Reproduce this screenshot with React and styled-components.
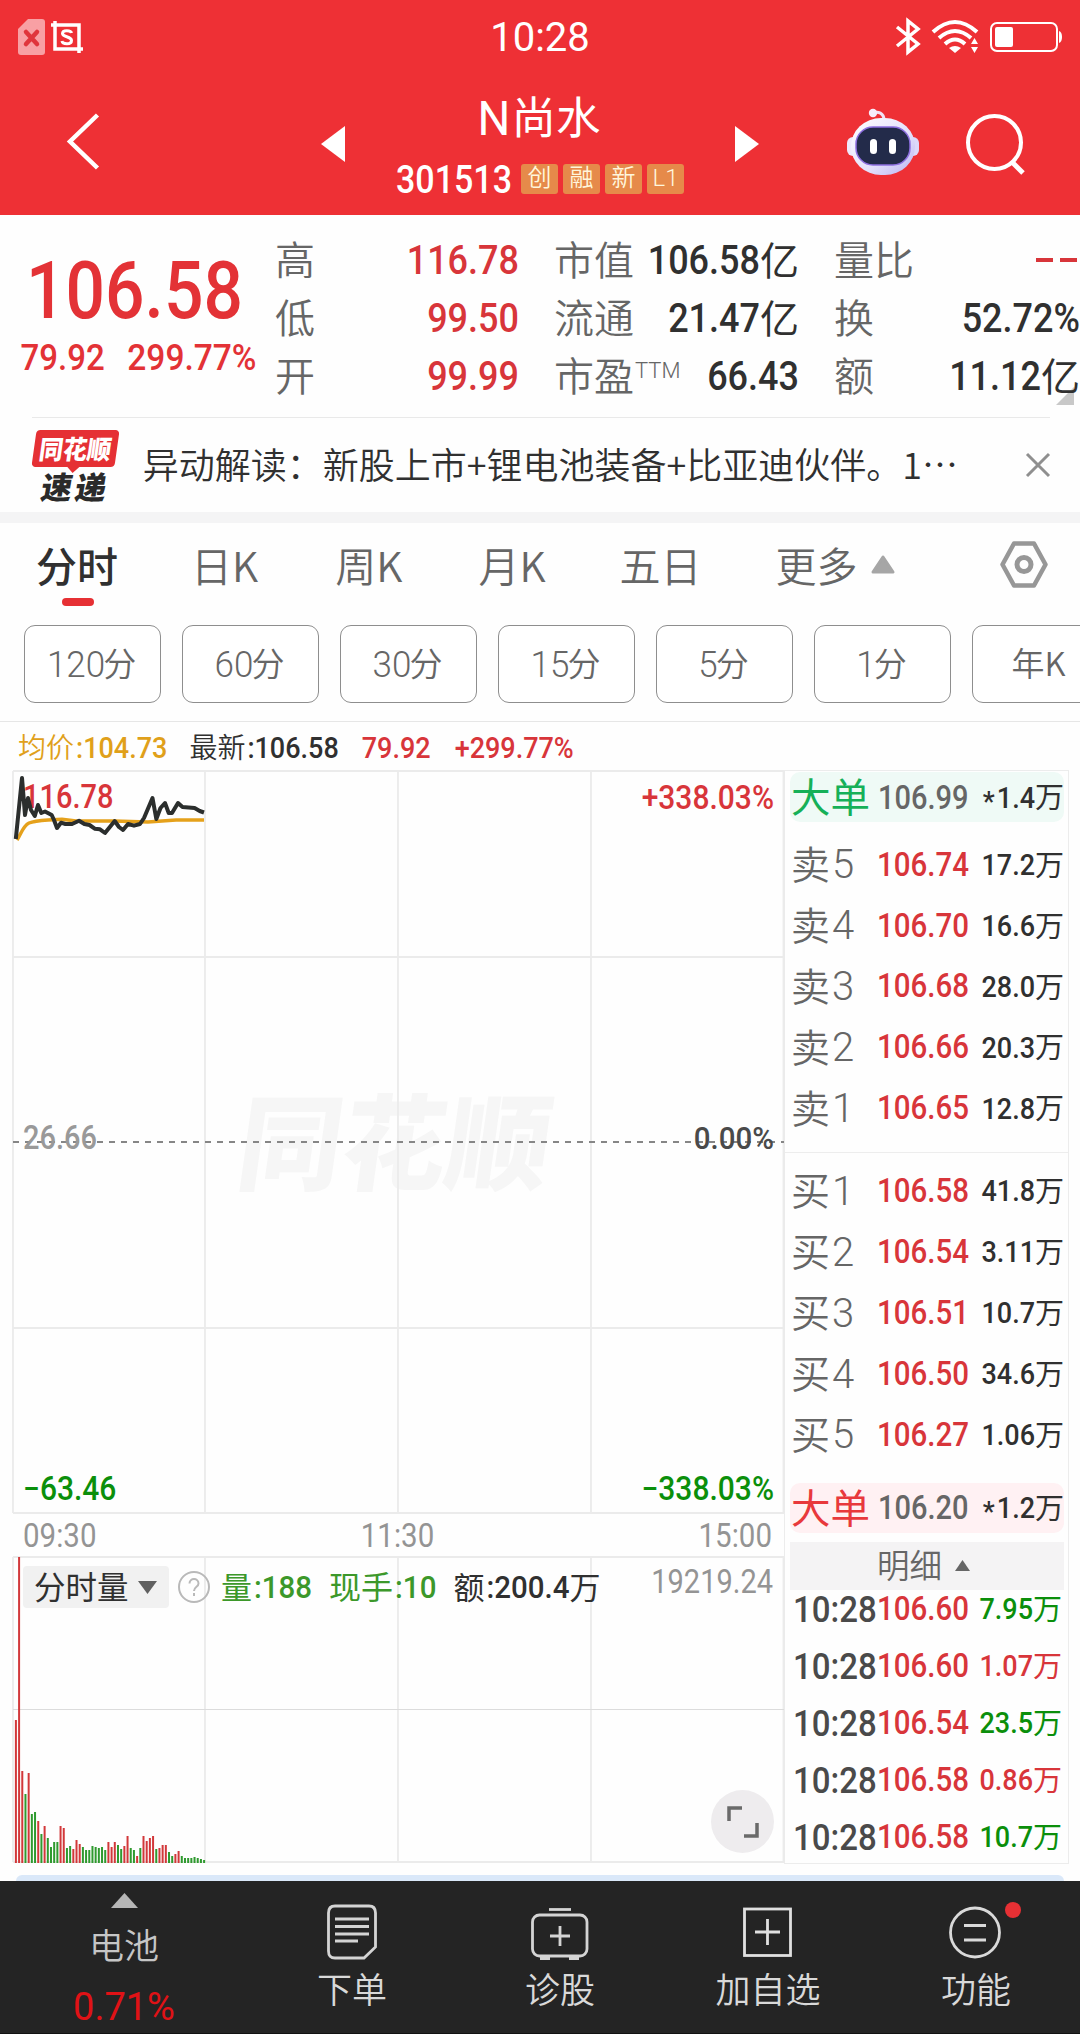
import React from 'react';
import styled, { createGlobalStyle } from 'styled-components';

const RED = '#d8353a';
const GREEN = '#0b8f0b';
const DARK = '#303030';
const GREY = '#666';

const GlobalStyle = createGlobalStyle`
  * {
    box-sizing: border-box;
  }

  body {
    margin: 0;
    background: #fff;
    font-family: Roboto, 'Noto Sans CJK SC', sans-serif;
  }
`;

const Screen = styled.div`
  display: flex;
  flex-direction: column;
  width: 1080px;
  height: 2034px;
  overflow: hidden;
  background: #fefefe;
  line-height: 1;
`;

/* Tall, narrow digits */
const Num = styled.span`
  display: inline-block;
  font-family: Roboto, sans-serif;
  font-size: ${(p) => p.$size || 30}px;
  font-weight: ${(p) => p.$weight || 500};
  line-height: 1;
  letter-spacing: ${(p) => p.$spacing || 0}px;
  color: ${(p) => p.$color || 'inherit'};
  white-space: pre;
  transform: translateY(1px) scaleY(${(p) => p.$tall || 1.12});
`;

const Cn = styled.span`
  margin: 0 2px 0.1em -2px;
  font-family: 'Noto Sans CJK SC', sans-serif;
  font-size: ${(p) => p.$size || 40}px;
  font-weight: ${(p) => p.$weight || 350};
  line-height: 1;
  color: ${(p) => p.$color || 'inherit'};
  white-space: nowrap;
`;

/* 亿 / 万 after a number */
const Unit = styled(Cn)`
  margin: 0 0 0.08em;
  font-weight: 400;
`;

const Star = styled(Num)`
  margin-right: 2px;
  transform: translateY(5px);
`;

const Icon = styled.svg`
  display: block;
  flex: none;
  overflow: visible;
`;

/* ---------- Header ---------- */

const Header = styled.header`
  flex: none;
  height: 215px;
  background: #ee3035;
  color: #fff;
`;

const StatusBar = styled.div`
  display: grid;
  grid-template-columns: 1fr auto 1fr;
  align-items: center;
  height: 72px;
  padding: 1px 18px 0;
`;

const StatusGroup = styled.div`
  display: flex;
  align-items: center;
  justify-content: ${(p) => (p.$end ? 'flex-end' : 'flex-start')};
  gap: ${(p) => p.$gap}px;
`;

const NavBar = styled.div`
  display: flex;
  align-items: center;
  height: 143px;
  padding: 0 0 2px 67px;
`;

const Spacer = styled.div`
  flex: none;
  width: ${(p) => p.$w || 0}px;
  height: ${(p) => p.$h || 0}px;
`;

const TitleBlock = styled.div`
  display: flex;
  flex-direction: column;
  align-items: center;
  width: 390px;
  padding-top: 4px;
`;

const Title = styled.div`
  display: flex;
  align-items: center;
  height: 44px;
  gap: 3px;
`;

const CodeRow = styled.div`
  display: flex;
  align-items: center;
  gap: 5px;
  height: 30px;
  margin-top: 24px;
`;

const Code = styled(Num)`
  margin-right: 4px;
`;

const Badge = styled.span`
  display: flex;
  align-items: center;
  justify-content: center;
  width: 37px;
  height: 30px;
  padding-bottom: 1px;
  border-radius: 3px;
  background: #e68a4a;
  color: #fff6dc;
  font-size: 24px;
  font-weight: 350;
`;

/* ---------- Quote ---------- */

const Quote = styled.section`
  display: flex;
  flex: none;
  height: 202px;
  padding-top: 16px;
`;

const PriceBlock = styled.div`
  display: flex;
  flex-direction: column;
  align-items: center;
  width: 277px;
  padding-top: 25px;
  color: #e33236;
`;

const BigPrice = styled(Num)`
  margin-right: 8px;
`;

const ChangeRow = styled.div`
  display: flex;
  justify-content: space-between;
  width: 236px;
  margin-top: 14px;
`;

const StatColumn = styled.div`
  width: ${(p) => p.$w}px;
  margin-right: ${(p) => p.$gap || 0}px;
`;

const StatRow = styled.div`
  position: relative;
  z-index: 0;
  display: flex;
  align-items: center;
  justify-content: space-between;
  height: 58px;
  color: ${(p) => p.$color};
`;

const StatLabel = styled(Cn)`
  display: flex;
  color: ${GREY};
`;

const Ttm = styled.span`
  margin: 6px -8px 0 1px;
  font-size: 22px;
  font-family: Roboto, sans-serif;
`;

const Value = styled.span`
  display: flex;
  align-items: center;
`;

const Dash = styled.i`
  width: 17px;
  height: 4px;
  margin-left: 7px;
  background: ${RED};
`;

const Corner = styled.i`
  position: absolute;
  right: 6px;
  bottom: 0;
  z-index: -1;
  border: 9px solid transparent;
  border-right-color: #c8c8c8;
  border-bottom-color: #c8c8c8;
`;

/* ---------- News ---------- */

const News = styled.section`
  display: flex;
  align-items: center;
  flex: none;
  height: 95px;
  margin: 0 30px 0 32px;
  border-top: 1px solid #e9e9e9;
`;

const Brand = styled.div`
  display: flex;
  flex-direction: column;
  align-items: center;
  width: 88px;
  margin-right: 25px;
`;

const BrandTag = styled.div`
  position: relative;
  display: flex;
  align-items: center;
  justify-content: center;
  width: 83px;
  height: 37px;
  border-radius: 4px;
  background: #e53034;
  transform: skewX(-8deg);

  &::after {
    content: '';
    position: absolute;
    left: 36px;
    top: 37px;
    border: 6px solid transparent;
    border-top-color: #e53034;
    border-bottom: 0;
  }
`;

const BrandName = styled(Cn)`
  margin: 0 0 1px;
  color: #fff;
  transform: scaleY(1.08);
`;

const BrandSub = styled(Cn)`
  margin: 3px 0 0;
  letter-spacing: 3px;
  color: #2a2a2a;
  transform: skewX(-10deg);
`;

const Band = styled.div`
  flex: none;
  height: 11px;
  background: #f4f4f5;
`;

/* ---------- Tabs ---------- */

const Tabs = styled.nav`
  display: flex;
  flex: none;
  align-items: center;
  height: 86px;
  padding: 0 0 3px 36px;
`;

const Tab = styled.div`
  position: relative;
  display: flex;
  align-items: center;
  margin-left: ${(p) => p.$gap}px;
  font-size: 41px;
  font-family: 'Noto Sans CJK SC', sans-serif;
  font-weight: ${(p) => (p.$active ? 500 : 350)};
  color: ${(p) => (p.$active ? DARK : GREY)};

  &::after {
    content: '';
    display: ${(p) => (p.$active ? 'block' : 'none')};
    position: absolute;
    left: 26px;
    bottom: -21px;
    width: 32px;
    height: 8px;
    border-radius: 4px;
    background: #e63034;
  }
`;

const Periods = styled.div`
  display: flex;
  flex: none;
  gap: 21px;
  height: 113px;
  padding: 16px 0 0 24px;
  border-bottom: 1px solid #e6e6e6;
  overflow: hidden;
`;

const Period = styled.button`
  display: flex;
  flex: none;
  align-items: center;
  justify-content: center;
  width: 137px;
  height: 78px;
  padding: 0;
  border: 1px solid #8e8e8e;
  border-radius: 11px;
  background: #fff;
  color: ${GREY};
`;

const Legend = styled.div`
  display: flex;
  flex: none;
  align-items: center;
  height: 48px;
  padding: 3px 0 0 20px;
`;

const LegendItem = styled.span`
  display: flex;
  align-items: center;
  margin-right: ${(p) => p.$gap}px;
  color: ${(p) => p.$color};
`;

/* ---------- Charts ---------- */

const Main = styled.main`
  display: flex;
  flex: none;
  height: 1094px;
`;

const Charts = styled.div`
  width: 784px;
  padding-left: 12px;
`;

const Chart = styled.div`
  position: relative;
  height: ${(p) => p.$h}px;
`;

const Plot = styled(Icon)`
  position: relative;
`;

const ChartLabel = styled.div`
  position: absolute;
  display: flex;
  ${(p) => (p.$right ? 'right: 10px;' : 'left: 11px;')}
  top: ${(p) => p.$top}px;
`;

const Watermark = styled.div`
  position: absolute;
  left: 228px;
  top: 315px;
  font: 900 104px/1 'Noto Sans CJK SC', sans-serif;
  color: #f6f6f6;
  transform: skewX(-8deg);
`;

const TimeAxis = styled.div`
  display: flex;
  align-items: center;
  justify-content: space-between;
  height: 43px;
  padding: 3px 12px 0 11px;
`;

const VolumeBar = styled.div`
  position: absolute;
  left: 11px;
  right: 11px;
  top: 10px;
  display: flex;
  align-items: center;
  height: 42px;
`;

const Picker = styled.div`
  display: flex;
  align-items: center;
  justify-content: space-between;
  width: 146px;
  height: 42px;
  padding: 0 12px 0 13px;
  margin-right: 9px;
  border-radius: 4px;
  background: #f1f1f1;
`;

const VolumeMax = styled(Num)`
  margin: -12px 0 0 auto;
`;

const Expand = styled.div`
  position: absolute;
  right: 10px;
  bottom: 10px;
  display: flex;
  align-items: center;
  justify-content: center;
  width: 63px;
  height: 63px;
  border-radius: 50%;
  background: #eeecee;
`;

const VolumeStat = styled.span`
  display: flex;
  align-items: center;
  margin-left: ${(p) => p.$gap}px;
  color: ${(p) => p.$color};
`;

/* ---------- Order book ---------- */

const Book = styled.aside`
  width: 285px;
  border: 1px solid #ececec;
`;

const BigOrder = styled.div`
  display: flex;
  align-items: center;
  height: 50px;
  margin: ${(p) => p.$m};
  padding: 0 0 0 3px;
  border-radius: 10px;
  background: ${(p) => p.$bg};
`;

const Levels = styled.div`
  padding: ${(p) => (p.$divided ? 7 : 0)}px 4px 0 8px;
  border-top: ${(p) => (p.$divided ? '1px solid #ededed' : '0')};
`;

const Level = styled.div`
  display: flex;
  align-items: center;
  height: 60.9px;
  color: ${GREY};
`;

const Label = styled.span`
  display: flex;
  align-items: center;
  width: ${(p) => p.$w}px;
`;

const Amount = styled.span`
  display: flex;
  align-items: center;
  margin-left: auto;
  color: ${(p) => p.$color || DARK};
`;

const DetailBar = styled.div`
  display: flex;
  align-items: center;
  justify-content: center;
  gap: 11px;
  height: 48px;
  margin: 9px 4px 0 5px;
  padding-right: 5px;
  background: #f4f3f4;
  color: ${GREY};
`;

const Trade = styled.div`
  display: flex;
  align-items: center;
  height: 57px;
  padding: 0 6px 0 8px;
`;

const Trades = styled.div`
  margin-top: -10px;
`;

/* ---------- Footer ---------- */

const Strip = styled.div`
  flex: none;
  height: 6px;
  margin: 11px 16px 0;
  border-radius: 12px 12px 0 0;
  background: #dae8f9;
`;

const BottomBar = styled.footer`
  display: grid;
  grid-template-columns: 248px repeat(4, 208px);
  flex: none;
  height: 153px;
  background: #242424;
  border-bottom: 1px solid #111;
`;

const BottomItem = styled.div`
  display: flex;
  flex-direction: column;
  align-items: center;
  padding-top: ${(p) => p.$top || 23}px;
  color: #d9d9d9;
`;

const BottomLabel = styled(Cn)`
  margin: ${(p) => p.$gap || 10}px 0 0;
`;

const stats = [
  {
    w: 242,
    gap: 37,
    rows: [
      ['高', '116.78', ''],
      ['低', '99.50', ''],
      ['开', '99.99', ''],
    ],
    color: RED,
  },
  {
    w: 243,
    gap: 37,
    rows: [
      ['市值', '106.58', '亿'],
      ['流通', '21.47', '亿'],
      ['市盈', '66.43', ''],
    ],
    color: DARK,
  },
  {
    w: 244,
    rows: [
      ['量比', '', ''],
      ['换', '52.72%', ''],
      ['额', '11.12', '亿'],
    ],
    color: DARK,
  },
];

const periods = [['120', '分'], ['60', '分'], ['30', '分'], ['15', '分'], ['5', '分'], ['1', '分'], ['', '年K']];

const asks = [
  ['卖', '5', '106.74', '17.2'],
  ['卖', '4', '106.70', '16.6'],
  ['卖', '3', '106.68', '28.0'],
  ['卖', '2', '106.66', '20.3'],
  ['卖', '1', '106.65', '12.8'],
];

const bids = [
  ['买', '1', '106.58', '41.8'],
  ['买', '2', '106.54', '3.11'],
  ['买', '3', '106.51', '10.7'],
  ['买', '4', '106.50', '34.6'],
  ['买', '5', '106.27', '1.06'],
];

const trades = [
  ['106.60', '7.95', GREEN],
  ['106.60', '1.07', RED],
  ['106.54', '23.5', GREEN],
  ['106.58', '0.86', RED],
  ['106.58', '10.7', GREEN],
];

// One bar per minute: height, then r(ise) or g(fall)
const volumes =
  '143r 306r 92r 69g 90r 49g 51g 42r 29g 37r 25g 16g 21g 21g 37r 35r 15g 17g 14r 23r 19r 16g 13g 13g 17g 16g 15g 16g 13g 21r 16r 21r 18g 14g 17r 27r 15g 13g 7r 15g 27r 22r 25r 27r 14g 15r 18r 18r 11g 7g 9r 12r 7g 5g 5g 5g 6g 5g 4g 3g'
    .split(' ')
    .map((v) => ({ h: parseInt(v, 10), up: v.endsWith('r') }));

const pricePath =
  'M3.8 69L10 8L13 45L16 28L19 40L22.8 46L26 35L29.3 43L33 41.5L39.7 45L42 50L45 58L49 52.7L53.4 54L60 54L67 50.7L72.4 54L77.5 55L82.7 58.7L88 59.3L93 63L102.7 51L107 57L111 60L116 54L122 55.7L128 54L132 48L140.5 28L144.3 49L148.5 38L153 33L156.7 43L160 43L166 33L170.5 37L182.6 38L187.7 41L192 42.5';

const avgPath = 'M5 70C9 64 11 56 17 53Q22 51 36 50L50 49.2L64 51L102 51L136 52L164 50L192 50';

const PriceLevels = ({ rows, divided }) => (
  <Levels $divided={divided}>
    {rows.map(([side, n, price, vol]) => (
      <Level key={side + n}>
        <Label $w={84}>
          <Cn $size={39}>{side}</Cn>
          <Num $size={40} $weight={300} $tall={1}>{n}</Num>
        </Label>
        <Num $color={RED} $size={29.5}>{price}</Num>
        <Amount>
          <Num $size={27} $tall={1.08}>{vol}</Num>
          <Unit $size={29}>万</Unit>
        </Amount>
      </Level>
    ))}
  </Levels>
);

const BigOrderRow = ({ bg, color, margin, price, vol }) => (
  <BigOrder $bg={bg} $m={margin}>
    <Label $w={85}>
      <Cn $size={39.5} $weight={400} $color={color}>大单</Cn>
    </Label>
    <Num $size={29} $color={GREY}>{price}</Num>
    <Amount>
      <Star $size={27}>*</Star>
      <Num $size={27} $tall={1.08}>{vol}</Num>
      <Unit $size={29}>万</Unit>
    </Amount>
  </BigOrder>
);

const Triangle = ({ w, h, d, color }) => (
  <Icon width={w} height={h}>
    <path d={d} fill={color} />
  </Icon>
);

const Robot = () => (
  <Icon width="72" height="68" viewBox="0 0 72 68">
    <defs>
      <linearGradient id="shell" x1="0" y1="0" x2="1" y2="1">
        <stop offset="0" stopColor="#fff" />
        <stop offset="0.6" stopColor="#e3e0fb" />
        <stop offset="1" stopColor="#b9b2f2" />
      </linearGradient>
    </defs>
    <path d="M37 11C37 4 31 2 26 4" fill="none" stroke="#f1e3f5" strokeWidth="3" />
    <circle cx="26" cy="4" r="4.200" fill="#f7edfb" />
    <rect x="0" y="28" width="12" height="19" rx="6" fill="#eee9fb" />
    <rect x="60" y="28" width="12" height="19" rx="6" fill="#dcd8fa" />
    <rect x="4" y="9" width="64" height="57" rx="30" fill="url(#shell)" />
    <rect x="9" y="18" width="54" height="38" rx="17" fill="#232b4a" stroke="#8d6fe0" strokeWidth="1.500" />
    <rect x="23" y="30" width="7" height="15" rx="3.500" fill="#fff" />
    <rect x="42" y="30" width="7" height="15" rx="3.500" fill="#fff" />
  </Icon>
);

const StatusIcons = () => (
  <StatusGroup $end $gap={12}>
    <Icon width="24" height="35" fill="none" stroke="#fff" strokeWidth="3.500">
      <path d="M1 8L22 25L12 33V2L22 10L1 27" />
    </Icon>
    <Icon width="46" height="34" fill="none" stroke="#fff" strokeWidth="4">
      <path d="M1 12Q23 -8 45 12M7 18Q23 4 39 18M13 24Q23 15 33 24" />
      <path d="M17 28Q23 24 29 28L23 33Z" fill="#fff" stroke="none" />
      <path d="M39 24L42.500 18L46 24ZM39 27L42.500 33L46 27Z" fill="#fff" stroke="none" />
    </Icon>
    <Icon width="72" height="30" fill="none" stroke="#fff">
      <rect x="1" y="1" width="66" height="28" rx="6" strokeWidth="2" />
      <rect x="5" y="5" width="18" height="20" rx="2" fill="#fff" stroke="none" />
      <path d="M69 9Q72 10 72 15Q72 20 69 21Z" fill="#fff" stroke="none" />
    </Icon>
  </StatusGroup>
);

const App = () => {
  return (
    <>
      <GlobalStyle />
      <Screen>
        <Header>
          <StatusBar>
            <StatusGroup $gap={6}>
              <Icon width="27" height="36">
                <path d="M10 0H24Q27 0 27 3V33Q27 36 24 36H3Q0 36 0 33V10Z" fill="#f8a0a4" />
                <path d="M8 13L19 25M19 13L8 25" stroke="#e0353c" strokeWidth="4.500" strokeLinecap="round" />
              </Icon>
              <Icon width="32" height="32" fill="none" stroke="#fff" strokeWidth="3.500">
                <path d="M0 4H28V32M4 0V28H32" />
                <path d="M20.500 12C20 9 11.500 8.500 11.500 12.500C11.500 16.500 20.500 15 20.500 19.500C20.500 24 11.500 23.500 11 20" strokeWidth="3" />
              </Icon>
            </StatusGroup>
            <Num $size={40} $weight={400} $tall={1.02}>10:28</Num>
            <StatusIcons />
          </StatusBar>
          <NavBar>
            <Icon width="32" height="58" fill="none" stroke="#fff" strokeWidth="4.500">
              <path d="M30.500 1L3 27.500L30.500 54" />
            </Icon>
            <Spacer $w={222} />
            <Triangle w={24} h={34} d="M24 0V36L0 18Z" color="#fff" />
            <TitleBlock>
              <Title>
                <Num $size={46} $weight={400} $tall={1.03}>N</Num>
                <Cn $size={44.5} $weight={400}>尚水</Cn>
              </Title>
              <CodeRow>
                <Code $size={34} $tall={1.12}>301513</Code>
                <Badge>创</Badge>
                <Badge>融</Badge>
                <Badge>新</Badge>
                <Badge>L1</Badge>
              </CodeRow>
            </TitleBlock>
            <Triangle w={24} h={34} d="M0 0V36L24 18Z" color="#fff" />
            <Spacer $w={88} />
            <Robot />
            <Spacer $w={47} />
            <Icon width="59" height="58" fill="none" stroke="#fff" strokeWidth="4">
              <circle cx="28.500" cy="28.500" r="26.500" />
              <path d="M46 48L57 59" strokeWidth="5" />
            </Icon>
          </NavBar>
        </Header>

        <Quote>
          <PriceBlock>
            <BigPrice $size={69.5} $tall={1.15}>106.58</BigPrice>
            <ChangeRow>
              <Num $size={33} $tall={1.13}>79.92</Num>
              <Num $size={33.5} $tall={1.12}>299.77%</Num>
            </ChangeRow>
          </PriceBlock>
          {stats.map((col, i) => (
            <StatColumn key={i} $w={col.w} $gap={col.gap}>
              {col.rows.map(([label, value, unit]) => (
                <StatRow key={label} $color={col.color}>
                  <StatLabel $size={40}>
                    {label}
                    {label === '市盈' && <Ttm>TTM</Ttm>}
                  </StatLabel>
                  <Value>
                    {value ? (
                      <Num $size={36}>{value}</Num>
                    ) : (
                      <>
                        <Dash />
                        <Dash />
                        <Spacer $w={3} />
                      </>
                    )}
                    {unit && <Unit $size={39}>{unit}</Unit>}
                  </Value>
                  {label === '额' && <Corner />}
                </StatRow>
              ))}
            </StatColumn>
          ))}
        </Quote>

        <News>
          <Brand>
            <BrandTag>
              <BrandName $size={24} $weight={900}>同花顺</BrandName>
            </BrandTag>
            <BrandSub $size={31} $weight={900}>速递</BrandSub>
          </Brand>
          <Cn $size={36} $color={DARK}>异动解读：新股上市+锂电池装备+比亚迪伙伴。1…</Cn>
          <Spacer $w={66} />
          <Icon width="24" height="24" stroke="#8f8f8f" strokeWidth="3">
            <path d="M1 1L23 23M23 1L1 23" />
          </Icon>
        </News>
        <Band />

        <Tabs>
          <Tab $active $gap={0}>分时</Tab>
          <Tab $gap={73}>日K</Tab>
          <Tab $gap={77}>周K</Tab>
          <Tab $gap={76}>月K</Tab>
          <Tab $gap={74}>五日</Tab>
          <Tab $gap={74}>更多</Tab>
          <Spacer $w={13} />
          <Icon width="24" height="19">
            <path d="M12 2L22 17H2Z" fill="#a6a6a6" stroke="#a6a6a6" strokeWidth="3" strokeLinejoin="round" />
          </Icon>
          <Spacer $w={105} />
          <Icon width="48" height="47" fill="none" stroke="#979797" strokeWidth="4.500" strokeLinejoin="round">
            <path d="M14 2.500H34L45.500 23.500L34 44.500H14L2.500 23.500Z" />
            <circle cx="24" cy="23.500" r="7" strokeWidth="5" />
          </Icon>
        </Tabs>

        <Periods>
          {periods.map(([n, unit]) => (
            <Period key={n + unit}>
              <Num $size={35} $weight={300} $tall={1.03}>{n}</Num>
              <Cn $size={33}>{unit}</Cn>
            </Period>
          ))}
        </Periods>

        <Legend>
          <LegendItem $gap={24} $color="#e0a01a">
            <Cn $size={28}>均价</Cn>
            <Num $size={27} $tall={1.1}>:104.73</Num>
          </LegendItem>
          <LegendItem $gap={23} $color={DARK}>
            <Cn $size={28}>最新</Cn>
            <Num $size={27} $tall={1.1}>:106.58</Num>
          </LegendItem>
          <LegendItem $gap={24} $color={RED}>
            <Num $size={27} $tall={1.1}>79.92</Num>
          </LegendItem>
          <LegendItem $color={RED}>
            <Num $size={27} $tall={1.1}>+299.77%</Num>
          </LegendItem>
        </Legend>

        <Main>
          <Charts>
            <Chart $h={743}>
              <Watermark>同花顺</Watermark>
              <ChartLabel $top={12}>
                <Num $size={29} $color={RED}>116.78</Num>
              </ChartLabel>
              <Plot width="772" height="744" fill="none">
                <path
                  d="M1 1H772M1 187H772M1 558H772M1 743H772M1 1V743M193 1V743M386 1V743M579 1V743M771.500 1V743"
                  stroke="#ebebeb"
                  strokeWidth="1.800"
                />
                <path d="M1 372H772" stroke="#868686" strokeWidth="1.800" strokeDasharray="6 6" />
                <path d={avgPath} stroke="#e5a11b" strokeWidth="3.500" />
                <path d={pricePath} stroke="#2b2e2d" strokeWidth="4" strokeLinejoin="round" />
              </Plot>
              <ChartLabel $top={12} $right>
                <Num $size={30} $tall={1.08} $color={RED}>+338.03%</Num>
              </ChartLabel>
              <ChartLabel $top={353}>
                <Num $size={29} $color="#999">26.66</Num>
              </ChartLabel>
              <ChartLabel $top={353} $right>
                <Num $size={29.5} $tall={1.08} $color="#4a4a4a">0.00%</Num>
              </ChartLabel>
              <ChartLabel $top={703}>
                <Num $size={30} $tall={1.08} $color={GREEN}>−63.46</Num>
              </ChartLabel>
              <ChartLabel $top={703} $right>
                <Num $size={30} $tall={1.08} $color={GREEN}>−338.03%</Num>
              </ChartLabel>
            </Chart>
            <TimeAxis>
              <Num $size={29.5} $weight={400} $color="#949494">09:30</Num>
              <Num $size={29.5} $weight={400} $color="#949494">11:30</Num>
              <Num $size={29.5} $weight={400} $color="#949494">15:00</Num>
            </TimeAxis>
            <Chart $h={307}>
              <Icon width="772" height="307" fill="none">
                <path
                  d="M1 1H772M1 306H772M1 1V306M193 1V306M386 1V306M579 1V306M771.500 1V306"
                  stroke="#ebebeb"
                  strokeWidth="1.800"
                />
                <path d="M1 153.500H772" stroke="#dcdcdc" />
                {volumes.map((v, i) => (
                  <rect
                    key={i}
                    x={2.9 + i * 3.19}
                    y={307 - v.h}
                    width="2"
                    height={v.h}
                    fill={v.up ? '#d2383a' : '#2f9a2f'}
                  />
                ))}
              </Icon>
              <VolumeBar>
                <Picker>
                  <Cn $size={31.5} $color={DARK} $weight={400}>分时量</Cn>
                  <Triangle w={19} h={13} d="M0 0H19L9.500 13Z" color="#606060" />
                </Picker>
                <Icon width="32" height="32" fill="none" stroke="#b9b9b9" strokeWidth="2">
                  <circle cx="16" cy="16" r="15" />
                  <path d="M11.500 12.500C11.500 6.500 20.500 6.500 20.500 12.500C20.500 16 16 15.500 16 20M16 22V25" />
                </Icon>
                <VolumeStat $gap={13} $color="#3c982a">
                  <Cn $size={31} $weight={400}>量</Cn>
                  <Num $size={29.5} $tall={1.08}>:188</Num>
                </VolumeStat>
                <VolumeStat $gap={19} $color="#3c982a">
                  <Cn $size={32} $weight={400}>现手</Cn>
                  <Num $size={29.5} $tall={1.08}>:10</Num>
                </VolumeStat>
                <VolumeStat $gap={19} $color={DARK}>
                  <Cn $size={31} $weight={400}>额</Cn>
                  <Num $size={29.5} $tall={1.08}>:200.4</Num>
                  <Unit $size={31}>万</Unit>
                </VolumeStat>
                <VolumeMax $size={29} $weight={400} $color="#949494">19219.24</VolumeMax>
              </VolumeBar>
              <Expand>
                <Icon width="32" height="32" fill="none" stroke="#6a6a6a" strokeWidth="3.500">
                  <path d="M2 15V2H15M30 17V30H17" />
                </Icon>
              </Expand>
            </Chart>
          </Charts>

          <Book>
            <BigOrderRow bg="#effaf6" color="#16b058" margin="1px 4px 12px 5px" price="106.99" vol="1.4" />
            <PriceLevels rows={asks} />
            <Spacer $h={14} />
            <PriceLevels rows={bids} divided />
            <BigOrderRow bg="#fff1f3" color="#e8393c" margin="18px 4px 0 5px" price="106.20" vol="1.2" />
            <DetailBar>
              <Cn $size={32.5}>明细</Cn>
              <Triangle w={15} h={11} d="M7.500 0L15 11H0Z" color="#666" />
            </DetailBar>
            <Trades>
              {trades.map(([price, vol, color], i) => (
                <Trade key={i}>
                  <Label $w={84}>
                    <Num $size={33} $color="#4a4a4a">10:28</Num>
                  </Label>
                  <Num $size={29.5} $color={RED}>{price}</Num>
                  <Amount $color={color}>
                    <Num $size={27} $tall={1.1}>{vol}</Num>
                    <Unit $size={29}>万</Unit>
                  </Amount>
                </Trade>
              ))}
            </Trades>
          </Book>
        </Main>

        <Strip />
        <BottomBar>
          <BottomItem $top={12}>
            <Triangle w={27} h={15} d="M13.500 0L27 15H0Z" color="#b6b6b6" />
            <BottomLabel $size={35} $gap={18} $color="#c6c6c6">电池</BottomLabel>
            <Spacer $h={26} />
            <Num $size={38} $weight={400} $tall={1} $color="#e01216">0.71%</Num>
          </BottomItem>
          <BottomItem>
            <Icon width="50" height="56" fill="none" stroke="#d4d4d4" strokeWidth="2.800">
              <path d="M8 2H42Q48.500 2 48.500 9V43L37 54H8Q1.500 54 1.500 47V9Q1.500 2 8 2Z" />
              <path d="M8 15H42M8 22.500H42M8 30H42M8 37H31" />
            </Icon>
            <BottomLabel $size={35}>下单</BottomLabel>
          </BottomItem>
          <BottomItem>
            <Icon width="58" height="56" fill="none" stroke="#d4d4d4" strokeWidth="2.800">
              <path d="M18 5.500H40" />
              <rect x="1.500" y="11" width="54.500" height="41" rx="7" />
              <path d="M29 22V42M19 32H39" />
              <path d="M9 54H19M38 54H48" strokeWidth="4" />
            </Icon>
            <BottomLabel $size={35}>诊股</BottomLabel>
          </BottomItem>
          <BottomItem>
            <Icon width="51" height="56" fill="none" stroke="#e0e0e0" strokeWidth="2.800">
              <rect x="1.500" y="5" width="46" height="46.500" />
              <path d="M24.500 15V41M12 28H37" />
            </Icon>
            <BottomLabel $size={35}>加自选</BottomLabel>
          </BottomItem>
          <BottomItem>
            <Icon width="52" height="56" fill="none" stroke="#d9d9d9" strokeWidth="2.800">
              <circle cx="25" cy="28.500" r="24.500" />
              <path d="M14 21.500H36M14 36H36" />
              <circle cx="63" cy="6" r="8" fill="#e63034" stroke="none" />
            </Icon>
            <BottomLabel $size={35}>功能</BottomLabel>
          </BottomItem>
        </BottomBar>
      </Screen>
    </>
  );
};

export default App;
